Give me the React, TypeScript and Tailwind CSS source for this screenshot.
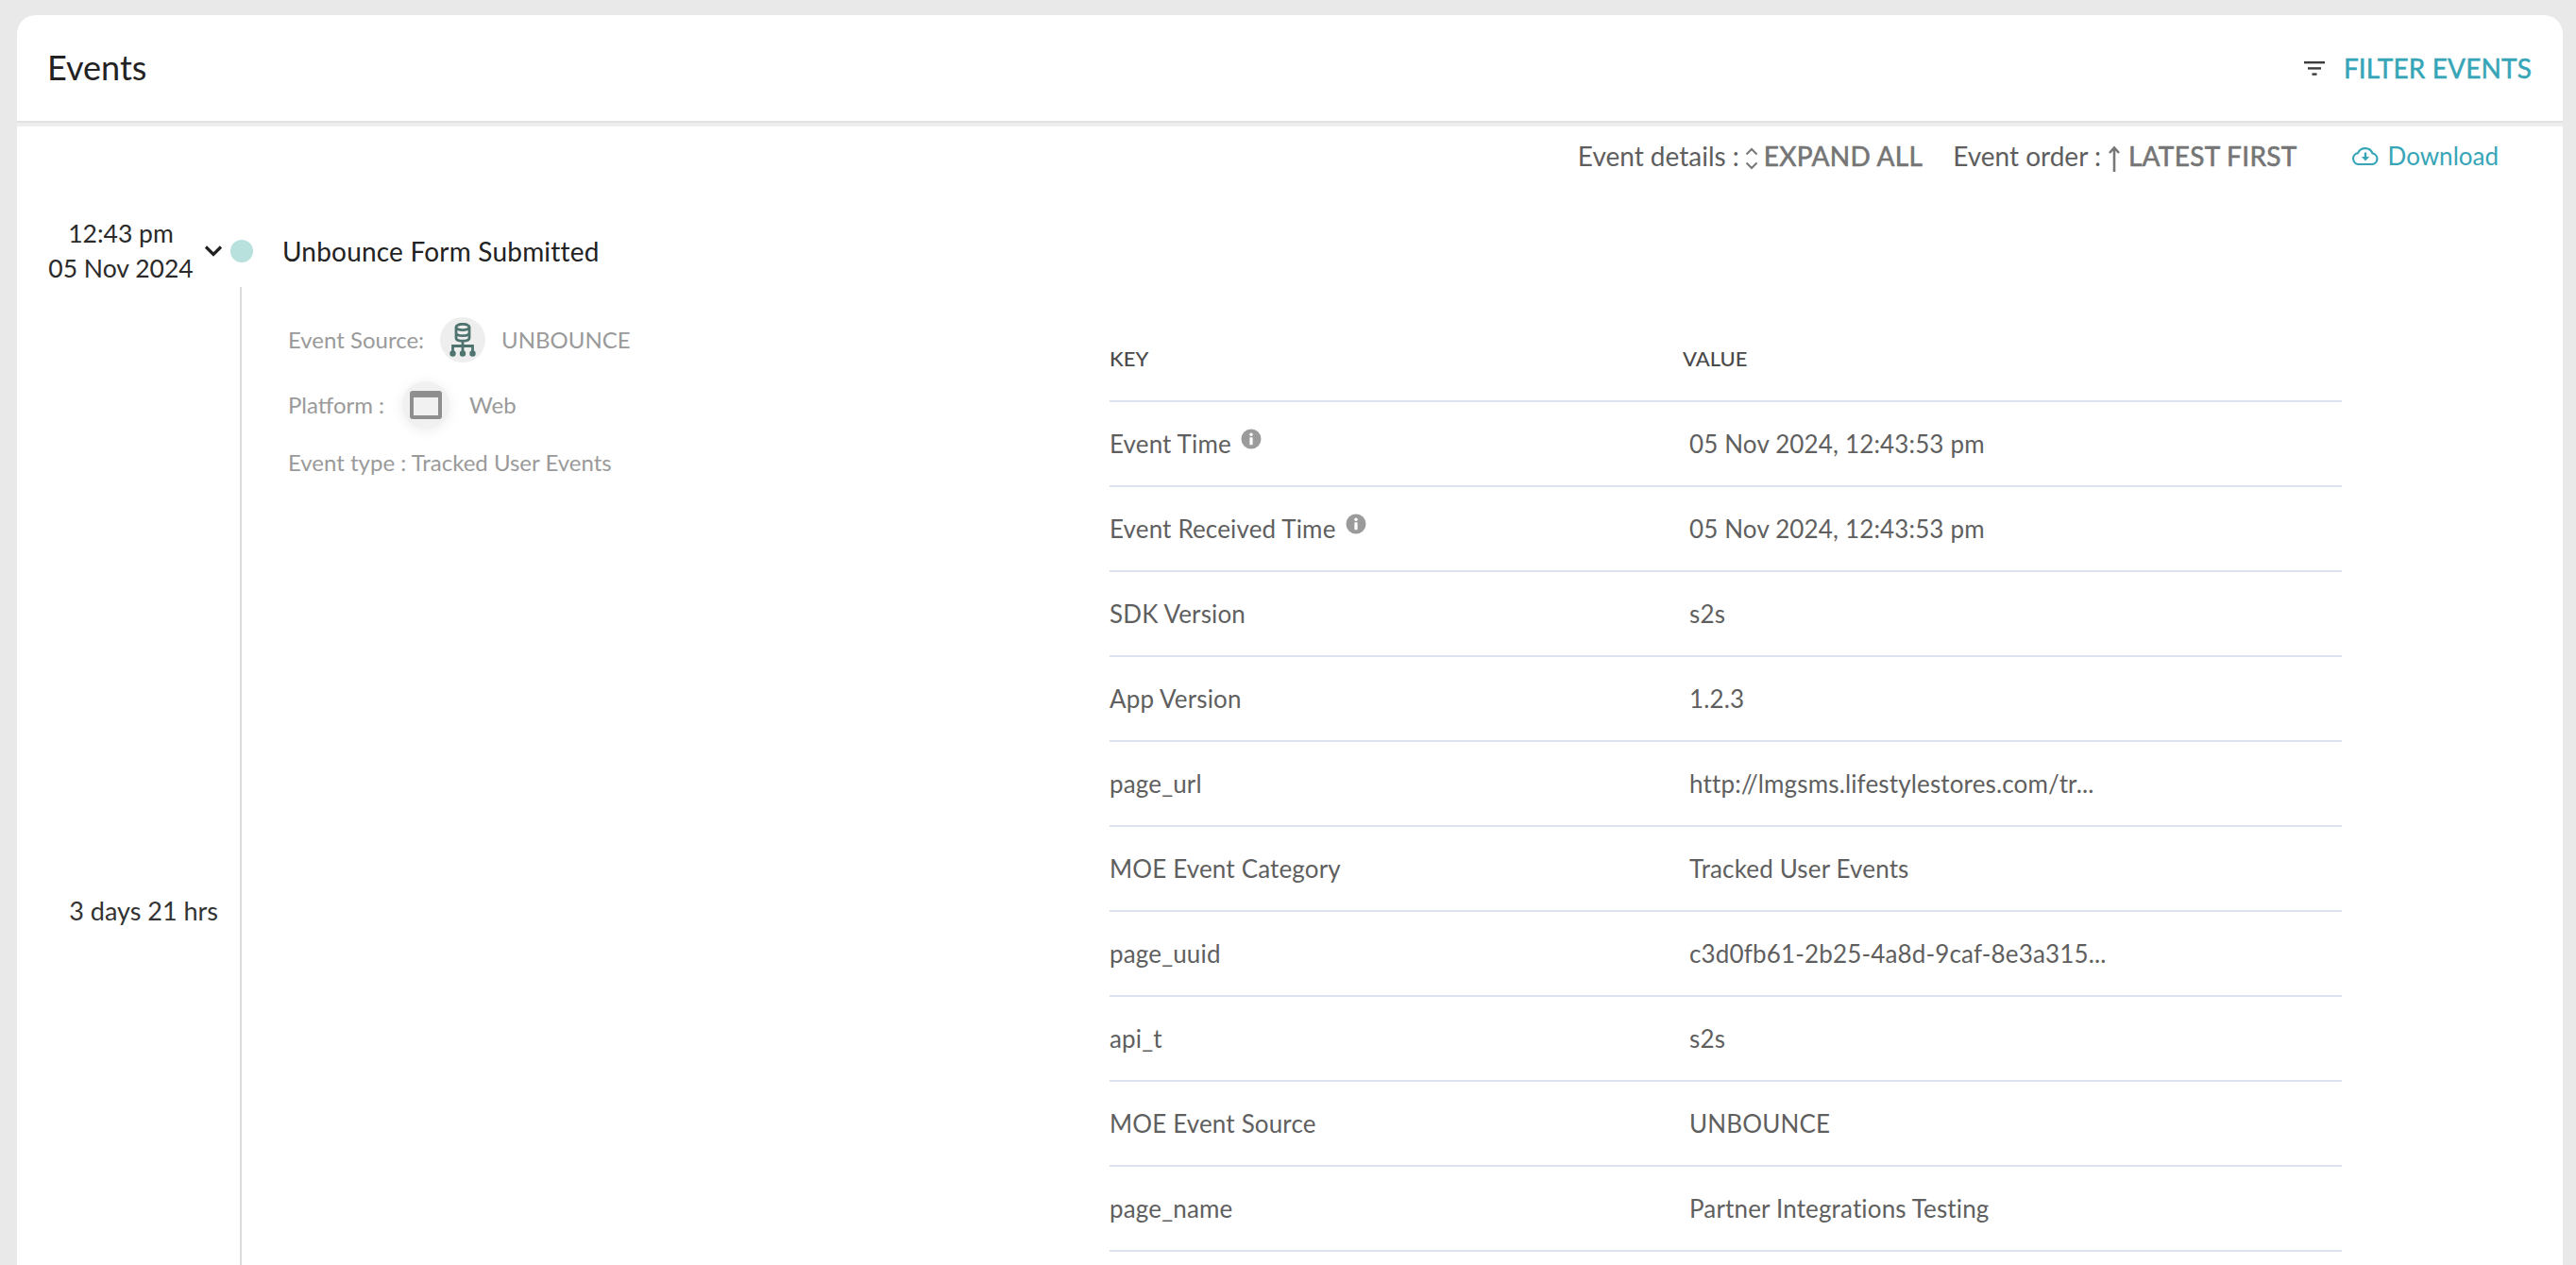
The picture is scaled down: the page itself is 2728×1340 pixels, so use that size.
import React from "react";

const rows: [string, string, boolean?][] = [
  ["Event Time", "05 Nov 2024, 12:43:53 pm", true],
  ["Event Received Time", "05 Nov 2024, 12:43:53 pm", true],
  ["SDK Version", "s2s"],
  ["App Version", "1.2.3"],
  ["page_url", "http://lmgsms.lifestylestores.com/tr..."],
  ["MOE Event Category", "Tracked User Events"],
  ["page_uuid", "c3d0fb61-2b25-4a8d-9caf-8e3a315..."],
  ["api_t", "s2s"],
  ["MOE Event Source", "UNBOUNCE"],
  ["page_name", "Partner Integrations Testing"],
];

function Info() {
  return (
    <svg width="22" height="22" viewBox="0 0 22 22" className="mb-[10px] ml-[10px] shrink-0">
      <circle cx="11" cy="11" r="10.5" fill="#9b9b9b" />
      <circle cx="11" cy="6.2" r="1.7" fill="#fff" />
      <rect x="9.4" y="9.2" width="3.2" height="8" rx="0.6" fill="#fff" />
    </svg>
  );
}

export default function App() {
  return (
    <div className="w-[2728px] h-[1340px] overflow-hidden bg-[#e9e9e9] pt-4 pl-[18px] pr-[14px] font-['Lato','Liberation_Sans',sans-serif]">
      <div className="rounded-t-[20px] bg-white h-[114px] border-b-2 border-[#e2e2e2] flex items-center justify-between pl-[32px] pr-[33px]">
        <div className="text-[36px] mb-[2px] text-[#222222]">Events</div>
        <div className="flex items-center">
          <svg width="22" height="15" viewBox="0 0 22 15" className="mr-[20px]">
            <rect x="0" y="0" width="22" height="2.4" fill="#3c3c3c" />
            <rect x="4" y="6.2" width="14" height="2.4" fill="#3c3c3c" />
            <rect x="8.5" y="12.4" width="5" height="2.4" fill="#3c3c3c" />
          </svg>
          <span className="text-[28px] tracking-[0.15px] [-webkit-text-stroke:0.5px] text-[#36a5b7]">FILTER EVENTS</span>
        </div>
      </div>
      <div className="h-1 bg-[#eeeeee]" />
      <div className="bg-white h-[1300px]">
        <div className="h-[62px] flex items-center justify-end pr-[68px] text-[28px] text-[#5e5e5e]">
          <span>Event details :</span>
          <svg width="16" height="30" viewBox="0 0 16 30" className="mx-[5px]" fill="none" stroke="#777" strokeWidth="2">
            <path d="M2.5 13.5L8 8l5.5 5.5M2.5 22.5L8 28l5.5-5.5" />
          </svg>
          <span className="text-[#757575] tracking-[0.3px] [-webkit-text-stroke:0.6px]">EXPAND ALL</span>
          <span className="ml-[32px]">Event order :</span>
          <svg width="14" height="28" viewBox="0 0 14 28" className="ml-[7px] mr-[8px] mt-[6px]" fill="none" stroke="#777" strokeWidth="2.6">
            <path d="M7 28V2.5M2 8L7 2.5 12 8" />
          </svg>
          <span className="text-[#757575] tracking-[0.3px] [-webkit-text-stroke:0.6px]">LATEST FIRST</span>
          <svg width="28" height="20" viewBox="0 0 28 20" className="ml-[58px] mr-[10px]">
            <path d="M7 19a6 6 0 0 1-1-11.9A8.5 8.5 0 0 1 21.6 7.5 5.8 5.8 0 0 1 21 19z" fill="none" stroke="#36a5b7" strokeWidth="2.2" />
            <path d="M14 6.5v6" fill="none" stroke="#36a5b7" strokeWidth="2.4" />
            <path d="M9.8 11h8.4L14 15.5z" fill="#36a5b7" />
          </svg>
          <span className="text-[26px] text-[#36a5b7]">Download</span>
        </div>

        <div className="flex items-center h-[76px] mt-[32px]">
          <div className="w-[200px] text-center text-[26.5px] leading-[37px] text-[#2a2a2a] pl-[20px]">
            <div>12:43 pm</div>
            <div>05 Nov 2024</div>
          </div>
          <svg width="20" height="14" viewBox="0 0 20 14" className="ml-[-2px]" fill="none" stroke="#222" strokeWidth="3.2">
            <path d="M2 2.5l8 8 8-8" />
          </svg>
          <div className="ml-[8px] w-6 h-6 rounded-full bg-[#b8e0dd]" />
          <div className="ml-[31px] text-[28px] tracking-[0.2px] text-[#222222]">Unbounce Form Submitted</div>
        </div>

        <div className="flex h-[1322px]">
          <div className="w-[213px] flex items-center justify-end text-[27px] text-[#333333]">3 days 21 hrs</div>
          <div className="ml-[23px] w-[2px] bg-[#dcdcdc]" />
          <div className="pl-[49px] w-[919px] shrink-0 text-[24px] text-[#9a9a9a]">
            <div className="flex items-center h-[48px] mt-[32px]">
              <span>Event Source:</span>
              <div className="ml-[17px] w-12 h-12 rounded-full bg-[#eeeeee] flex items-center justify-center">
                <svg width="28" height="36" viewBox="0 0 28 36" fill="none" stroke="#4f7470" strokeWidth="2.8">
                  <ellipse cx="14" cy="4.5" rx="7" ry="3.2" />
                  <path d="M7 4.5v11.5c0 2 3.1 3.2 7 3.2s7-1.2 7-3.2V4.5M7 10.5c0 2 3.1 3.2 7 3.2s7-1.2 7-3.2" />
                  <path d="M14 19v12M3.5 31v-6.5h21V31" />
                  <circle cx="3.5" cy="32.5" r="3.2" fill="#4f7470" stroke="none" />
                  <circle cx="14" cy="32.5" r="3.2" fill="#4f7470" stroke="none" />
                  <circle cx="24.5" cy="32.5" r="3.2" fill="#4f7470" stroke="none" />
                </svg>
              </div>
              <span className="ml-[17px]">UNBOUNCE</span>
            </div>
            <div className="flex items-center h-[50px] mt-[20px]">
              <span>Platform :</span>
              <div className="ml-[19px] w-[50px] h-[50px] rounded-full bg-[#f1f1f1] shadow-[0_2px_14px_rgba(0,0,0,0.08)] flex items-center justify-center">
                <svg width="34" height="30" viewBox="0 0 34 30">
                  <rect x="0" y="0" width="34" height="30" rx="3" fill="#8f8f8f" />
                  <rect x="4" y="7" width="26" height="19" fill="#f1f1f1" />
                </svg>
              </div>
              <span className="ml-[21px]">Web</span>
            </div>
            <div className="mt-[16px] leading-[40px]">Event type : Tracked User Events</div>
          </div>

          <div className="w-[1305px] text-[26px] tracking-[0.15px] text-[#5f5f5f]">
            <div className="h-[122px] pt-[30px] border-b-2 border-[#dde0ef] grid grid-cols-[607px_698px] items-center text-[22px] tracking-normal text-[#4a4a4a] font-medium">
              <div>KEY</div>
              <div>VALUE</div>
            </div>
            {rows.map(([k, v, info]) => (
              <div key={k} className="h-[90px] border-b-2 border-[#dde0ef] grid grid-cols-[607px_698px] items-center">
                <div className="flex items-center">
                  <span>{k}</span>
                  {info ? <Info /> : null}
                </div>
                <div className="pl-[7px]">{v}</div>
              </div>
            ))}
          </div>
        </div>
      </div>
    </div>
  );
}
